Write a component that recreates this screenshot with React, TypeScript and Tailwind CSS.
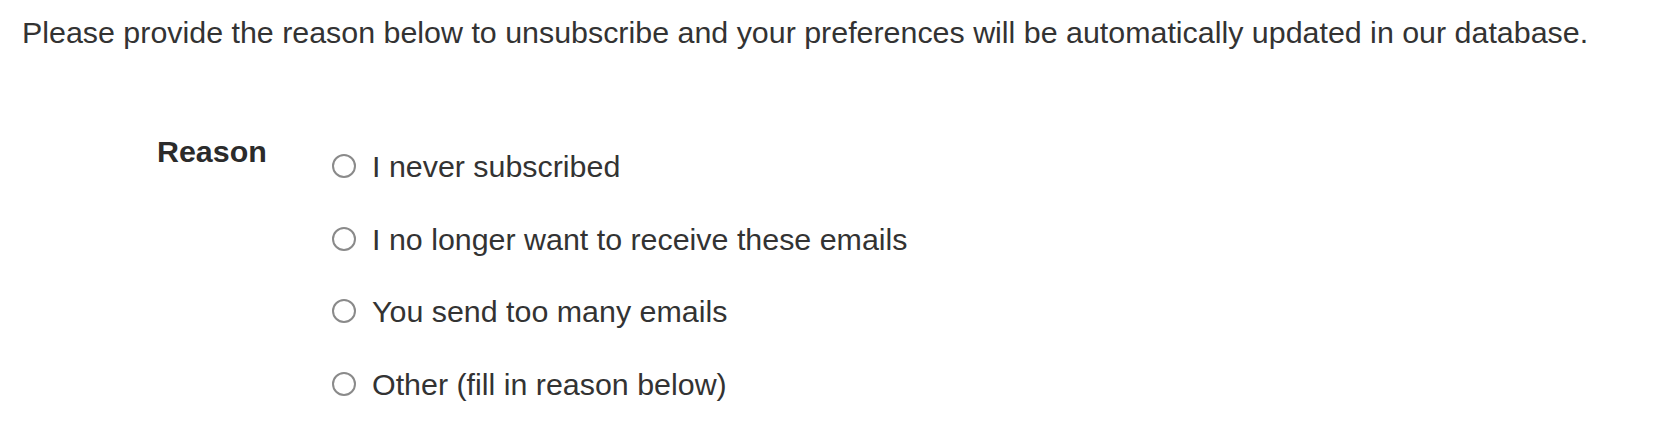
import React from "react";

const options = [
  "I never subscribed",
  "I no longer want to receive these emails",
  "You send too many emails",
  "Other (fill in reason below)",
];

export default function App() {
  return (
    <div className="min-h-[444px] w-full bg-white pl-[22px] pt-[15px] font-['Liberation_Sans',Arial,sans-serif] text-[30.4px] text-[#333333]">
      <p className="leading-[34px] whitespace-nowrap">
        Please provide the reason below to unsubscribe and your preferences will be automatically updated in our database.
      </p>
      <div className="mt-[85px] flex pl-[135px]">
        <div className="w-[175px] font-bold leading-[34px] text-[#2b2b2b]">Reason</div>
        <div className="flex flex-col gap-[38.5px] pt-[15px]">
          {options.map((o) => (
            <label key={o} className="flex items-center gap-[16px] leading-[34px]">
              <span className="box-border block h-[24px] w-[24px] rounded-full border-2 border-[#8a8a8a] bg-white" />
              <span>{o}</span>
            </label>
          ))}
        </div>
      </div>
    </div>
  );
}
